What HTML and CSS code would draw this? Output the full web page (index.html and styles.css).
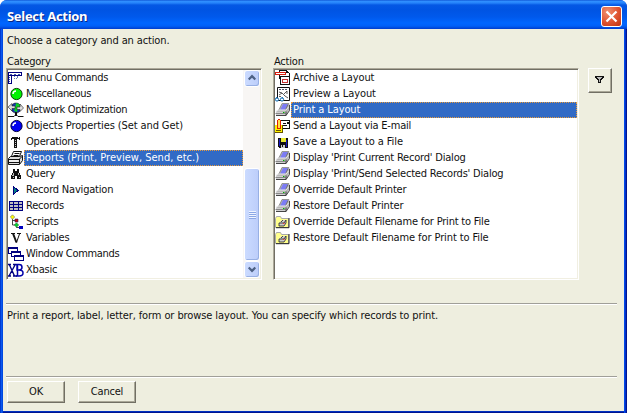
FILE: index.html
```html
<!DOCTYPE html>
<html lang="en">
<head>
<meta charset="utf-8">
<title>Select Action</title>
<link rel="stylesheet" href="styles.css">
</head>
<body>
<svg class="defs" width="0" height="0" aria-hidden="true">
  <defs>
    <symbol id="printer" viewBox="0 0 16 16">
      <path d="M4 7l3-5.500h7.500v6L11 13.500H1V9.500z" fill="#b8b8b8"/>
      <path d="M5 8l3-6h5l-3 6z" fill="#7c7cf4"/>
      <path d="M4 8l3-6.500h7" fill="none" stroke="#777" stroke-width=".7"/>
      <path d="M10.500 8L13 2.500" stroke="#555" stroke-width=".7"/>
      <path d="M1 9.500L3.500 8H11l3-3.500" fill="none" stroke="#e8e8e8"/>
      <path d="M1 10h10v3H1z" fill="#d0d0d0"/>
      <path d="M.5 11.500h10" stroke="#888"/>
      <path d="M1 13.500h10l3.500-5V3M11 9.500v4" fill="none" stroke="#333" stroke-width=".9"/>
      <path d="M8 10h1.500v1H8z" fill="#00b000"/>
    </symbol>
    <symbol id="folder" viewBox="0 0 16 16">
      <path d="M.5 4.500l1-2h4l1 2h7v9H.5z" fill="#ffff8c" stroke="#aaa"/>
      <path d="M1 13.700h13V4" fill="none" stroke="#222"/>
      <path d="M4 9l3-3h4v3l-2 3H4z" fill="#ccc"/><path d="M4 9h5l2-3v3l-2 3H4zM6 8l2-2" fill="none" stroke="#222" stroke-width=".8"/><path d="M8 9h1.500v1H8z" fill="#e33"/>
    </symbol>
  </defs>
</svg>
<div class="window">
  <header class="titlebar">
    <h1>Select Action</h1>
    <button class="close" aria-label="Close"><svg width="21" height="21" viewBox="0 0 21 21"><path d="M5.500 5.500l10 10M15.500 5.500l-10 10" stroke="#fff" stroke-width="2.200"/></svg></button>
  </header>
  <main class="content">
    <p class="intro">Choose a category and an action.</p>
    <div class="panes">
      <section class="category">
        <h2>Category</h2>
        <div class="listbox">
          <ul>
            <li class="snug"><svg viewBox="0 0 16 16"><path d="M0 2h14v4H4v8H0z" fill="#000080"/><path d="M1 3h12v2H1zM1 6h2v7H1z" fill="#fff"/><path d="M2 4h2v1H2zM6 4h2v1H6zM10 4h2v1h-2zM1 7h1v1H1zM1 9h1v1H1zM1 11h1v1H1z" fill="#4058a8"/><path d="M6 6h1v1H6zM6 8h1v1H6zM8 8h1v1H8zM9 6h1v2H9z" fill="#6078b0"/></svg><span>Menu Commands</span></li>
            <li class="snug"><svg viewBox="0 0 16 16" class="smooth"><circle cx="8.500" cy="8" r="5.600" fill="#00f200" stroke="#064006"/><path d="M5 8a3 3 0 0 1 3-3" fill="none" stroke="#fff" stroke-width="1.500"/></svg><span>Miscellaneous</span></li>
            <li class="snug"><svg viewBox="0 0 16 16" class="smooth"><circle cx="8" cy="6" r="5" fill="#1833b8" stroke="#111" stroke-width=".6"/><path d="M8 1l3 1 2 3-3 1-1 4-3-1 1-3z" fill="#0ed020"/><path d="M0 5l4-3.500V4h3v2.500H4V9zM15.500 6L12 9.500V7.500H9V5h3V2z" fill="#ddd" stroke="#222" stroke-width=".6"/><path d="M8 10v4" stroke="#111" stroke-width="2"/><path d="M0 14.500h6l2-2 2 2h5.500" fill="none" stroke="#111"/></svg><span>Network Optimization</span></li>
            <li class="loose"><svg viewBox="0 0 16 16" class="smooth"><circle cx="8.500" cy="8" r="5.600" fill="#0000f0" stroke="#000040"/><path d="M5 8a3 3 0 0 1 3-3" fill="none" stroke="#fff" stroke-width="1.500"/></svg><span>Objects Properties (Set and Get)</span></li>
            <li><svg viewBox="0 0 16 16"><path d="M3 4h1V3h6v1h1V3h1v3h-1V5H9v9H6V5H4v1H3z" fill="#111"/><path d="M7 6h1v1H7zM7 8h1v1H7zM7 10h1v1H7zM7 12h1v1H7z" fill="#ccc"/></svg><span>Operations</span></li>
            <li class="selected looser"><svg viewBox="0 0 16 16" class="smooth"><path d="M5.500 1.500h8l-2.500 6H3z" fill="#fff" stroke="#111"/><path d="M6.500 3.500h5M5.500 5.500h5" stroke="#111"/><path d="M.5 8.500l2-2h9l3-1v5l-3 4H.5z" fill="#ddd" stroke="#111"/><path d="M1 9.500h10l3-3M1 12.500h10M11.500 9v5" fill="none" stroke="#111"/><path d="M1 11h9" stroke="#fff"/></svg><span>Reports (Print, Preview, Send, etc.)</span></li>
            <li><svg viewBox="0 0 16 16"><path d="M5 3h2v2h2V3h2v3l2 4v3H9v-3H7v3H3v-3l2-4z" fill="#111"/><path d="M5 7v2H4M10 7v2M5 11h1M11 11h1" fill="none" stroke="#bbb"/></svg><span>Query</span></li>
            <li><svg viewBox="0 0 16 16"><path d="M5 4l5 4.500L5 13z" fill="#008080" stroke="#000080"/></svg><span>Record Navigation</span></li>
            <li><svg viewBox="0 0 16 16"><path d="M1.500 3.500h13v9h-13z" fill="#c0c0c0" stroke="#000080"/><path d="M1 6.500h14M1 9.500h14M5.500 3v10M10.500 3v10" stroke="#000080"/></svg><span>Records</span></li>
            <li><svg viewBox="0 0 16 16" class="smooth"><path d="M4.500 5v6h3M4.500 6.500h3M8.500 12.500v1h3" fill="none" stroke="#333" stroke-width=".9"/><path d="M4.500 .8l2.200 2.200-2.200 2.200L2.300 3z" fill="#ffff00" stroke="#777" stroke-width=".7"/><path d="M7 5h3v3H7z" fill="#d00000" stroke="#226" stroke-width=".6"/><path d="M8.500 8.800l2.200 2.200-2.200 2.200L6.300 11z" fill="#00d030" stroke="#363" stroke-width=".6"/><path d="M11 12h4v3h-4z" fill="#0000c0"/></svg><span>Scripts</span></li>
            <li><svg viewBox="0 0 16 16" class="smooth"><path d="M3 3.500h4M9 3.500h4" fill="none" stroke="#111"/><path d="M5 3.500l3.500 9" fill="none" stroke="#111" stroke-width="2"/><path d="M11.500 4L8.500 12.500" fill="none" stroke="#111"/></svg><span>Variables</span></li>
            <li class="snug"><svg viewBox="0 0 16 16"><path d="M0 1h10v7H0z" fill="#000080"/><path d="M1 3h8v4H1z" fill="#fff"/><path d="M3 5h10v6H3z" fill="#000080"/><path d="M4 7h8v3H4z" fill="#fff"/><path d="M6 9h10v6H6z" fill="#000080"/><path d="M7 11h8v3H7z" fill="#fff"/></svg><span>Window Commands</span></li>
            <li><svg viewBox="0 0 16 16" class="smooth"><path d="M0 2.500h3M5 2.500h3M1.500 3l5 11M7 3L1 14M0 14h3M5 14h4" fill="none" stroke="#000080" stroke-width="1.400"/><path d="M8 2.500h3q3 0 3 2.700T11 8H9V2.500M11 8q4 0 4 3t-4 3H8M9.500 3v11" fill="none" stroke="#0000a8" stroke-width="1.500"/></svg><span>Xbasic</span></li>
          </ul>
          <div class="scrollbar">
            <i class="arrow"><svg viewBox="0 0 15 15"><path d="M4 9l3.500-3.500L11 9" fill="none" stroke="#4d6185" stroke-width="2.300"/></svg></i>
            <i class="track"></i>
            <i class="thumb"><b></b></i>
            <i class="arrow"><svg viewBox="0 0 15 15"><path d="M4 6l3.500 3.500L11 6" fill="none" stroke="#4d6185" stroke-width="2.300"/></svg></i>
          </div>
        </div>
      </section>
      <section class="action">
        <h2>Action</h2>
        <div class="listbox">
          <ul>
            <li class="loose"><svg viewBox="0 0 16 16"><path d="M4 0h8v1h1v1h1v1h1v12H5V9H4z" fill="#111"/><path d="M5 1h6v2h3v3H5z" fill="#fff"/><path d="M0 2h11v3H0z" fill="#d82010"/><path d="M1 3h9v1H1z" fill="#fff"/><path d="M6 7h8v7H6z" fill="#fff"/><path d="M7 9h6v4H7z" fill="#c83030"/><path d="M8 10h4v2H8z" fill="#fff"/></svg><span>Archive a Layout</span></li>
            <li class="loose"><svg viewBox="0 0 16 16" class="smooth"><path d="M2.500 1.500h12v13h-12z" fill="#fff" stroke="#111"/><path d="M4 3.500h9" stroke="#556" stroke-dasharray="2 1"/><path d="M4 6l3 1M4 9l3-2 3 3M9 8l3-3M10 10l3 2M4 10.500h2M12 5v3" stroke="#333" fill="none" stroke-width=".8"/><path d="M2 11L.8 13M7 11l1 2" stroke="#0868b0"/><circle cx="2" cy="13.500" r="1.600" fill="#fff" stroke="#0868b0"/><circle cx="7" cy="13.500" r="1.600" fill="#fff" stroke="#0868b0"/></svg><span>Preview a Layout</span></li>
            <li class="selected loose"><svg viewBox="0 0 16 16" class="smooth"><use href="#printer"/></svg><span>Print a Layout</span></li>
            <li><svg viewBox="0 0 16 16"><path d="M5 2h10v9H5z" fill="#111"/><path d="M6 3h8v7H6z" fill="#fff"/><path d="M8 5h3v1H8zM8 7h4v1H8zM12 4h2v2h-2z" fill="#111"/><path d="M0 7h7v8H0z" fill="#fff200"/><path d="M0 14h7v1H0zM7 7h1v8H7z" fill="#665500"/><path d="M2 2h1V1h2v1h1v9H2z" fill="#e02000"/><path d="M3 2h2v8H3z" fill="#ffe048"/><path d="M1 12h5v1H1z" fill="#665500"/></svg><span>Send a Layout via E-mail</span></li>
            <li class="loose"><svg viewBox="0 0 16 16"><path d="M3 4h10v10H4l-1-1z" fill="#111"/><path d="M4 5h1v7H4zM11 6h1v7h-1z" fill="#1818c0"/><path d="M6 4h5v4H6z" fill="#e9e930"/><path d="M6 11h4v3H6z" fill="#ccc"/><path d="M7 11h1v2H7z" fill="#111"/></svg><span>Save a Layout to a File</span></li>
            <li><svg viewBox="0 0 16 16" class="smooth"><use href="#printer"/></svg><span>Display 'Print Current Record' Dialog</span></li>
            <li><svg viewBox="0 0 16 16" class="smooth"><use href="#printer"/></svg><span>Display 'Print/Send Selected Records' Dialog</span></li>
            <li><svg viewBox="0 0 16 16" class="smooth"><use href="#printer"/></svg><span>Override Default Printer</span></li>
            <li class="loose"><svg viewBox="0 0 16 16" class="smooth"><use href="#printer"/></svg><span>Restore Default Printer</span></li>
            <li><svg viewBox="0 0 16 16" class="smooth"><use href="#folder"/></svg><span>Override Default Filename for Print to File</span></li>
            <li class="loose"><svg viewBox="0 0 16 16" class="smooth"><use href="#folder"/></svg><span>Restore Default Filename for Print to File</span></li>
          </ul>
        </div>
      </section>
      <button class="filter" aria-label="Filter"><svg width="10" height="8" viewBox="0 0 10 8"><path d="M0 0h9v2H8v1H7v1H6v3H3V4H2V3H1V2H0z" fill="#111"/><path d="M2 1h5v1H6v1H5v3H4V3H3V2H2z" fill="#bbb"/></svg></button>
    </div>
    <p class="description">Print a report, label, letter, form or browse layout. You can specify which records to print.</p>
    <footer class="actions"><button>OK</button><button>Cancel</button></footer>
  </main>
</div>
</body>
</html>
```
FILE: styles.css
```css
* { box-sizing: border-box; }
body { margin: 0; background: #fff; font: 11px/16px "DejaVu Sans Condensed", "DejaVu Sans", sans-serif; font-stretch: condensed; color: #111; letter-spacing: -0.2px; overflow: hidden; }
h1, h2, p, ul { margin: 0; padding: 0; font-size: inherit; font-weight: normal; }
button { padding: 0; font: inherit; letter-spacing: inherit; color: inherit; }
svg { display: block; flex: none; shape-rendering: crispEdges; }
.smooth, .close svg, .arrow svg { shape-rendering: auto; }
.defs { position: absolute; }
.window { width: 627px; height: 413px; display: flex; flex-direction: column; background: linear-gradient(90deg, #003ad0 0 1px, #0a58ee 1px 2px, #0048e0 2px 3px, transparent 3px 624px, #0048e8 624px 625px, #0030c8 625px 626px, #001590 626px), linear-gradient(#0050ea 0 411px, #0030c0 411px 412px, #001590 412px); border-radius: 7px 7px 0 0; overflow: hidden; }
.titlebar { height: 29px; flex: none; display: flex; align-items: center; justify-content: space-between; padding: 3px 5px 0 7px; background: linear-gradient(#0847cc 0, #3292ff 1px, #2583fa 3px, #0558e4 5px, #0054e3 10px, #0059ec 17px, #0066ff 23px, #0060f8 26px, #003dcc 29px); }
.titlebar h1 { font: bold 13px/20px "Noto Sans", sans-serif; color: #fff; letter-spacing: -0.3px; text-shadow: 1px 1px #0b2784; }
.close { width: 21px; height: 21px; border: 1px solid #fff; border-radius: 3px; background: radial-gradient(circle at 30% 25%, #f09070, #df5330 55%, #bd3210); }
.close svg { margin: -1px; }
.content { flex: 1; margin: 0 3px 3px; padding: 4px 7px 8px 3px; background: #eeeedf; display: flex; flex-direction: column; }
.intro { height: 20px; padding-left: 1px; letter-spacing: -0.13px; }
.panes { display: flex; height: 227px; }
h2 { height: 15px; line-height: 17px; padding-left: 1px; }
.category { width: 256px; margin-right: 11px; }
.action { width: 306px; margin-right: 9px; }
.listbox { display: flex; height: 212px; padding: 1px; background: #fff; border-style: solid; border-width: 1px; border-color: #aca899 #fff #fff #aca899; box-shadow: inset 1px 1px #716f64, inset -1px -1px #f1efe2; }
ul { flex: 1; list-style: none; }
li { height: 16px; display: flex; }
li svg { width: 16px; height: 16px; }
li span { flex: 1; padding-left: 2px; line-height: 15px; white-space: nowrap; }
.snug { letter-spacing: -0.33px; }
.loose { letter-spacing: -0.1px; }
.looser { letter-spacing: 0.02px; }
.selected span { color: #fff; background: #316ac5; outline: 1px dotted #e89a3b; outline-offset: -1px; }
.scrollbar { width: 17px; padding-left: 1px; display: flex; flex-direction: column; background: #f8f6f4; }
.arrow, .thumb { border: 1px solid #fff; border-radius: 3px; background: linear-gradient(90deg, #cbdbff, #bccdfa); box-shadow: inset -1px -1px #98b0e4; }
.arrow { height: 17px; }
.track { flex: 1; }
.thumb { height: 93px; display: grid; place-items: center; }
.thumb b { width: 7px; height: 8px; background: repeating-linear-gradient(#f0f5ff 0 1px, #8ca8e6 1px 2px); }
.filter { width: 24px; height: 25px; margin-top: 15px; display: grid; place-items: center; }
.filter, .actions button { border: 1px solid; border-color: #fff #716f64 #716f64 #fff; background: #eeeedf; box-shadow: inset -1px -1px #aaa898; }
.filter svg { margin-left: -1px; margin-top: -1px; }
.description { height: 74px; margin-top: 23px; padding: 4px 0 0 1px; letter-spacing: -0.1px; border-top: 1px solid #a09f99; border-bottom: 1px solid #a09f99; box-shadow: inset 0 1px #fff, 0 1px #fff; }
.actions { display: flex; gap: 13px; margin: 4px 0 0 1px; }
.actions button { width: 58px; height: 22px; }
```
